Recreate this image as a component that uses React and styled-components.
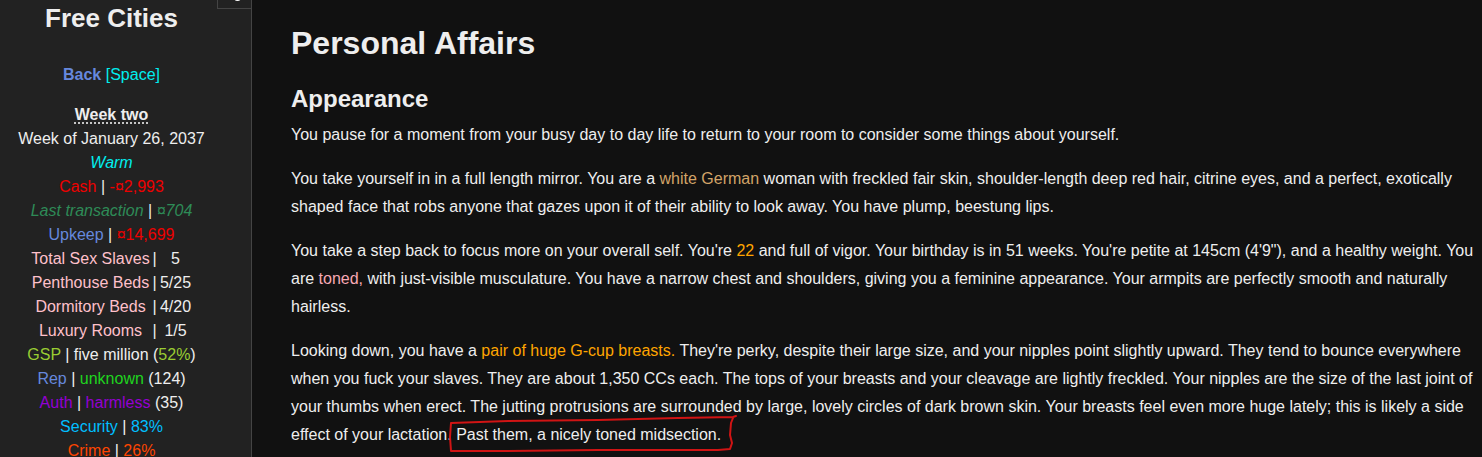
import React from 'react';
import styled, { createGlobalStyle } from 'styled-components';

const GlobalStyle = createGlobalStyle`
  html, body, #root {
    margin: 0;
    height: 100%;
  }
  body {
    background: #111;
    color: #eee;
    font-family: "Liberation Sans", Arial, sans-serif;
    font-size: 16px;
    overflow: hidden;
  }
`;

const Page = styled.div`
  display: flex;
  height: 100vh;
  overflow: hidden;
`;

const Sidebar = styled.aside`
  position: relative;
  flex: 0 0 252px;
  box-sizing: border-box;
  width: 252px;
  padding: 3px 28px 0 0;
  background: #222;
  border-right: 1px solid #444;
  text-align: center;
  overflow: hidden;
`;

const StowButton = styled.button`
  position: absolute;
  top: -21px;
  right: 0;
  width: 34px;
  height: 30px;
  padding: 0 0 7px;
  background: transparent;
  border: 1px solid #444;
  border-right: none;
  display: flex;
  align-items: flex-end;
  justify-content: center;
  box-sizing: border-box;

  &::before {
    content: '';
    width: 7px;
    height: 4px;
    background: #fff;
    border-radius: 0 0 4px 4px;
    margin-left: 6px;
  }
`;

const Title = styled.h1`
  margin: 0;
  font-size: 26px;
  line-height: 30px;
  font-weight: bold;
  color: #eee;
`;

const Nav = styled.div`
  margin-top: 30px;
  line-height: 24px;
`;

const Stats = styled.div`
  margin-top: 16px;
  line-height: 24px;
`;

const Row = styled.div`
  line-height: 24px;
  white-space: nowrap;
`;

const Link = styled.span`
  color: #68d;
  font-weight: bold;
`;

const Tone = styled.span`
  color: ${({ $c }) => $c || 'inherit'};
  font-style: ${({ $i }) => ($i ? 'italic' : 'normal')};
  font-weight: ${({ $b }) => ($b ? 'bold' : 'normal')};
`;

const WeekTitle = styled.span`
  font-weight: bold;
  text-decoration: underline dotted;
  text-underline-offset: 3px;
`;

const RoomTable = styled.div`
  display: grid;
  grid-template-columns: 120px 8px 34px;
  justify-content: center;
  line-height: 24px;
  white-space: nowrap;
`;

const Cell = styled.span`
  text-align: center;
  color: ${({ $c }) => $c || '#eee'};
`;

const Main = styled.main`
  flex: 1;
  padding: 25px 4px 0 39px;
  overflow: hidden;
`;

const Heading = styled.h1`
  margin: 0;
  font-size: 32px;
  line-height: 36px;
  font-weight: bold;
`;

const SubHeading = styled.h2`
  margin: 24px 0 8px;
  font-size: 24px;
  line-height: 28px;
  font-weight: bold;
`;

const Para = styled.p`
  margin: 0 0 16px;
  line-height: 28px;
`;

const Marked = styled.span`
  position: relative;
  display: inline-block;
`;

const Scribble = styled.svg`
  position: absolute;
  left: -8px;
  top: -6px;
  width: 290px;
  height: 40px;
  overflow: visible;
  pointer-events: none;
`;

const rooms = [
  ['Total Sex Slaves', '5'],
  ['Penthouse Beds', '5/25'],
  ['Dormitory Beds', '4/20'],
  ['Luxury Rooms', '1/5'],
];

const Pipe = () => <Tone $c="#eee"> | </Tone>;

export default function App() {
  return (
    <Page>
      <GlobalStyle />
      <Sidebar>
        <StowButton aria-label="Toggle sidebar" />
        <Title>Free Cities</Title>
        <Nav>
          <Link>Back</Link> <Tone $c="#0ee">[Space]</Tone>
        </Nav>
        <Stats>
          <Row><WeekTitle>Week two</WeekTitle></Row>
          <Row>Week of January 26, 2037</Row>
          <Row><Tone $c="#0ee" $i>Warm</Tone></Row>
          <Row><Tone $c="#e00">Cash</Tone><Pipe /><Tone $c="#e00">-¤2,993</Tone></Row>
          <Row><Tone $c="#2e8b57" $i>Last transaction</Tone><Pipe /><Tone $c="#2e8b57" $i>¤704</Tone></Row>
          <Row><Tone $c="#68d">Upkeep</Tone><Pipe /><Tone $c="#e00">¤14,699</Tone></Row>
          <RoomTable>
            {rooms.map(([label, value]) => (
              <React.Fragment key={label}>
                <Cell $c="#ffc0cb">{label}</Cell>
                <Cell>|</Cell>
                <Cell>{value}</Cell>
              </React.Fragment>
            ))}
          </RoomTable>
          <Row><Tone $c="#9acd32">GSP</Tone><Pipe />five million (<Tone $c="#9acd32">52%</Tone>)</Row>
          <Row><Tone $c="#68d">Rep</Tone><Pipe /><Tone $c="#1fd41f">unknown</Tone> (124)</Row>
          <Row><Tone $c="#9400d3">Auth</Tone><Pipe /><Tone $c="#9400d3">harmless</Tone> (35)</Row>
          <Row><Tone $c="#00bfff">Security</Tone><Pipe /><Tone $c="#00bfff">83%</Tone></Row>
          <Row><Tone $c="#ff4500">Crime</Tone><Pipe /><Tone $c="#ff4500">26%</Tone></Row>
        </Stats>
      </Sidebar>
      <Main>
        <Heading>Personal Affairs</Heading>
        <SubHeading>Appearance</SubHeading>
        <Para>
          You pause for a moment from your busy day to day life to return to your room to consider some things about yourself.
        </Para>
        <Para>
          You take yourself in in a full length mirror. You are a <Tone $c="#d2a468">white German</Tone> woman with freckled fair skin,
          shoulder-length deep red hair, citrine eyes, and a perfect, exotically shaped face that robs anyone that gazes upon it of
          their ability to look away. You have plump, beestung lips.
        </Para>
        <Para>
          You take a step back to focus more on your overall self. You're <Tone $c="#ffa500">22</Tone> and full of vigor. Your birthday
          is in 51 weeks. You're petite at 145cm (4'9"), and a healthy weight. You are <Tone $c="#f7a8b4">toned,</Tone> with just-visible
          musculature. You have a narrow chest and shoulders, giving you a feminine appearance. Your armpits are perfectly smooth and
          naturally hairless.
        </Para>
        <Para>
          Looking down, you have a <Tone $c="#ffa500">pair of huge G-cup breasts.</Tone> They're perky, despite their large size, and
          your nipples point slightly upward. They tend to bounce everywhere when you fuck your slaves. They are about 1,350 CCs each.
          The tops of your breasts and your cleavage are lightly freckled. Your nipples are the size of the last joint of your thumbs
          when erect. The jutting protrusions are surrounded by large, lovely circles of dark brown skin. Your breasts feel even more
          huge lately; this is likely a side effect of your lactation.{' '}
          <Marked>
            Past them, a nicely toned midsection.
            <Scribble viewBox="0 0 290 40">
              <path
                d="M3 8 L60 6 L150 5 L230 3 L285 2 L288 1 M285 3 L283 8 L282 20 L284 28 L282 34 L270 35 L150 35 L60 36 L3 36 L2 22 L3 8"
                fill="none"
                stroke="#d01414"
                strokeWidth="2"
                strokeLinejoin="round"
                strokeLinecap="round"
              />
            </Scribble>
          </Marked>
        </Para>
      </Main>
    </Page>
  );
}
